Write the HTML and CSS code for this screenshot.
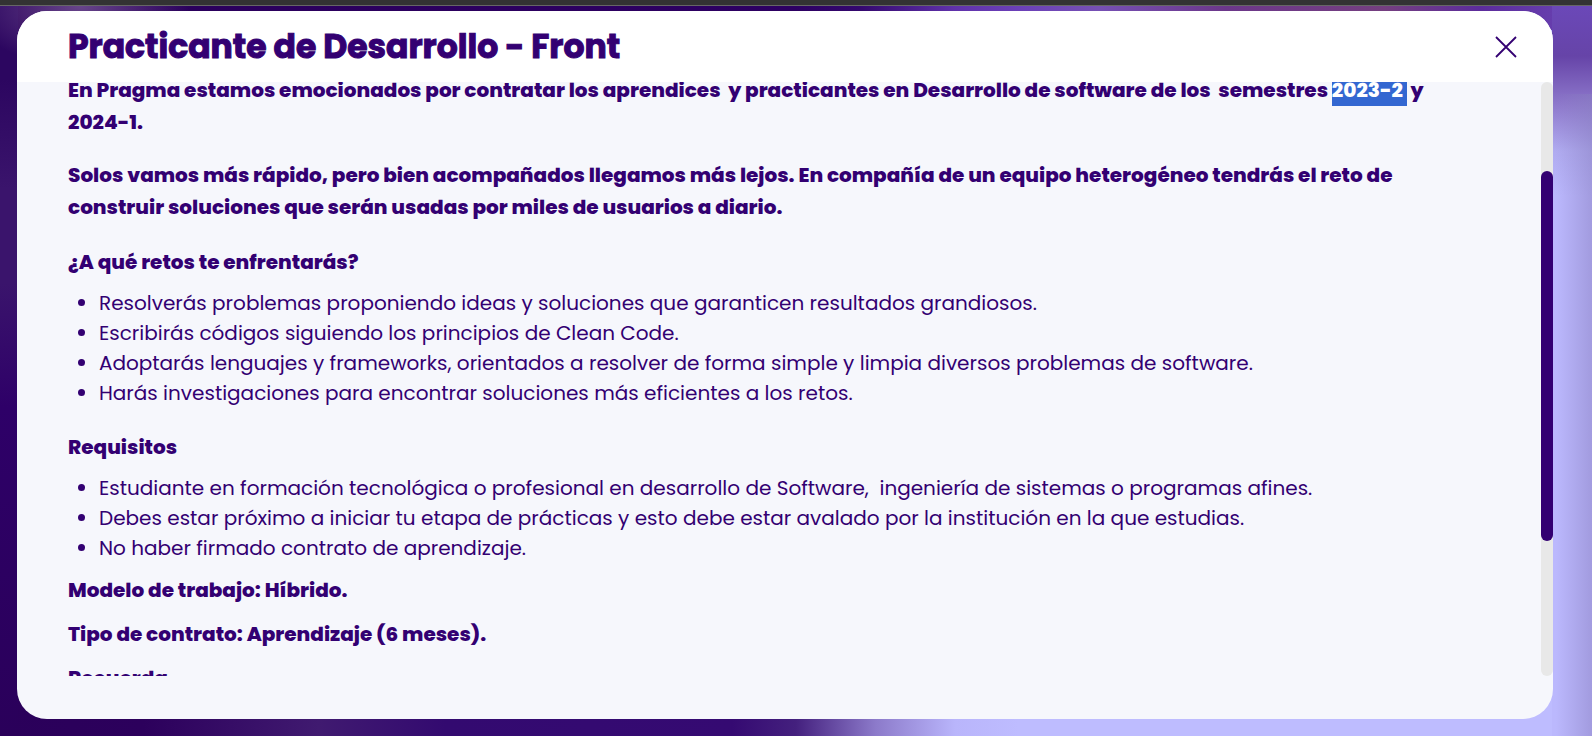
FILE: index.html
```html
<!DOCTYPE html>
<html lang="es">
<head>
<meta charset="utf-8">
<meta name="viewport" content="width=device-width, initial-scale=1">
<title>Practicante de Desarrollo - Front</title>
<link rel="stylesheet" href="styles.css">
</head>
<body>
<div class="topbar"></div>
<main class="backdrop">
  <section class="modal" role="dialog" aria-labelledby="modal-title">
    <header class="modal-header">
      <h1 class="modal-title" id="modal-title">Practicante de Desarrollo - Front</h1>
      <button class="close" type="button" aria-label="Cerrar">
        <svg viewBox="0 0 24 24" width="24" height="24" aria-hidden="true"><path d="M2 2 22 22M22 2 2 22" fill="none" stroke="currentColor" stroke-width="1.8"/></svg>
      </button>
    </header>
    <div class="modal-body">
      <div class="viewport">
        <article class="content">
          <p class="lead">En Pragma estamos emocionados por contratar los aprendices&nbsp; y practicantes en Desarrollo de software de los&nbsp; semestres <mark class="selected">2023-2&nbsp;</mark> y 2024-1.</p>
          <p class="lead">Solos vamos más rápido, pero bien acompañados llegamos más lejos. En compañía de un equipo heterogéneo tendrás el reto de construir soluciones que serán usadas por miles de usuarios a diario.</p>
          <h2 class="subtitle">¿A qué retos te enfrentarás?</h2>
          <ul class="list">
            <li>Resolverás problemas proponiendo ideas y soluciones que garanticen resultados grandiosos.</li>
            <li>Escribirás códigos siguiendo los principios de Clean Code.</li>
            <li>Adoptarás lenguajes y frameworks, orientados a resolver de forma simple y limpia diversos problemas de software.</li>
            <li>Harás investigaciones para encontrar soluciones más eficientes a los retos.</li>
          </ul>
          <h2 class="subtitle">Requisitos</h2>
          <ul class="list">
            <li>Estudiante en formación tecnológica o profesional en desarrollo de Software,&nbsp; ingeniería de sistemas o programas afines.</li>
            <li>Debes estar próximo a iniciar tu etapa de prácticas y esto debe estar avalado por la institución en la que estudias.</li>
            <li>No haber firmado contrato de aprendizaje.</li>
          </ul>
          <p class="fact">Modelo de trabajo: Híbrido.</p>
          <p class="fact">Tipo de contrato: Aprendizaje (6 meses).</p>
          <p class="fact">Recuerda</p>
        </article>
      </div>
      <div class="track"><div class="thumb"></div></div>
    </div>
  </section>
</main>
</body>
</html>
```
FILE: styles.css
```css
* { box-sizing: border-box; }

body {
  margin: 0;
  height: 100vh;
  display: flex;
  flex-direction: column;
  overflow: hidden;
  color: #330072;
  font-family: Poppins, Inter, "Liberation Sans", sans-serif;
  font-size: 20px;
}

.topbar {
  flex: none;
  height: 6px;
  background: #333;
  border-bottom: 1px solid #666;
}

.backdrop {
  flex: 1;
  min-height: 0;
  display: flex;
  padding: 5px 39px 17px 17px;
  background:
    radial-gradient(ellipse 110px 60px at 80px 0, #68458a, transparent) no-repeat,
    linear-gradient(#2c0660, #2c0660 10%, #3a146c 25%, #3a146c 38%, #2e0068 55%, #2a005a) 0 0 / 18px 100% no-repeat,
    linear-gradient(90deg, transparent, #897ec180) 100% 100% / 36px 88% no-repeat,
    linear-gradient(#6b48b8, #6644a8 50px, #8f7acd 100px, #b0abf0 145px, #bbb8fd 190px) 100% 0 / 40px 100% no-repeat,
    linear-gradient(90deg, #2a005a, #2d0062 50%, #34086e 54%, #6032ab 60%, #6b40b8 64%, #7650b4 69%, #6c378a 77%, #753f80 87%, #5c2c9c 93%, #6b46b6) 0 0 / 100% 24px no-repeat,
    linear-gradient(90deg, #2a005a, #2c005c 9%, #401a70 20%, #330a70 28%, #350a72 46%, #44207e 50%, #8c7aca 55%, #b9b5fb 60%, #bebcff 64%);
}

.modal {
  flex: 1;
  min-width: 0;
  display: flex;
  flex-direction: column;
  padding-bottom: 43px;
  border-radius: 30px;
  overflow: hidden;
  background: #f6f7fc;
}

.modal-header {
  flex: none;
  display: flex;
  align-items: center;
  justify-content: space-between;
  height: 71px;
  padding: 0 35px 0 51px;
  background: #fff;
}

.modal-title {
  margin: 0;
  font-size: 33px;
  line-height: 50px;
  font-weight: 700;
  -webkit-text-stroke: 1px currentColor;
}

.close {
  display: flex;
  padding: 0;
  border: 0;
  background: none;
  color: #330072;
}

.modal-body {
  flex: 1;
  min-height: 0;
  display: flex;
}

.viewport {
  flex: 1;
  min-width: 0;
  overflow: hidden;
}

.content {
  margin-top: -8px;
  padding: 0 72px 0 51px;
}

.lead,
.subtitle,
.fact {
  margin: 0;
  font-size: 20px;
  line-height: 32px;
  font-weight: 800;
}

.lead { margin-bottom: 21px; }
.subtitle { margin: 23px 0 10px; }

.list {
  margin: 0 0 11px;
  padding-left: 31px;
  line-height: 30px;
  font-weight: 400;
}

.fact { margin-bottom: 12px; }

.selected {
  padding-bottom: 2px;
  background: #3367d1;
  color: #fff;
}

.track {
  flex: none;
  width: 12px;
  border-radius: 6px;
  background: #e8e8e8;
}

.thumb {
  height: 62.3%;
  margin-top: 89px;
  border-radius: 6px;
  background: #330072;
}
```
